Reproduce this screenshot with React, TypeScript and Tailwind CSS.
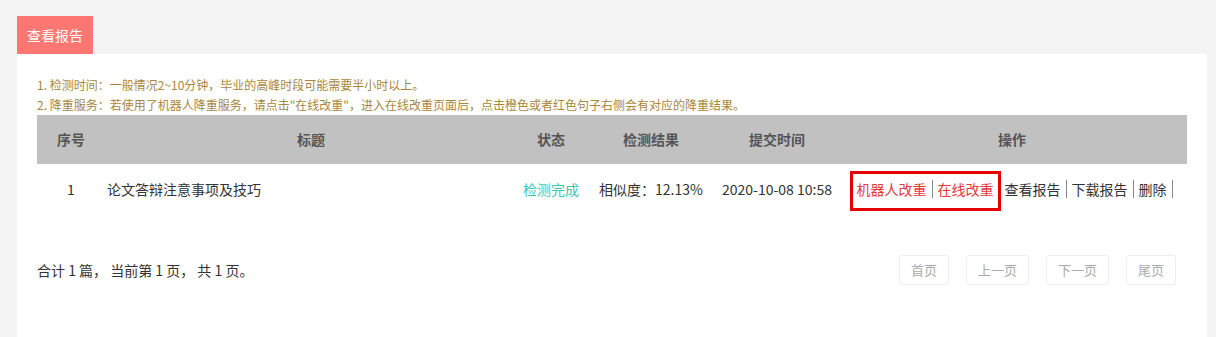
const font = { fontFamily: '"Microsoft YaHei", "Noto Sans CJK SC", sans-serif' };

const ops = ["机器人改重", "在线改重", "查看报告", "下载报告", "删除"];

const OpLink = ({ text, red }: { text: string; red?: boolean }) => (
    <span className={`inline-block px-[5px] leading-[18px] border-r border-[#888] ${red ? "text-[#e4393c]" : "text-[#333]"}`}>
        {text}
    </span>
);

const App = () => {
    return (
        <div className="min-h-[337px] bg-[#f4f4f4] pl-[17px] pr-[9px] pt-[16px]" style={font}>
            <div className="inline-flex h-[38px] items-center bg-[#fd7772] px-[10px] text-[14px] text-white">
                查看报告
            </div>
            <div className="min-h-[283px] bg-white px-[20px] pt-[21px]">
                <div className="text-[12px] leading-[20px] text-[#a8873c]">
                    <p>1. 检测时间：一般情况2~10分钟，毕业的高峰时段可能需要半小时以上。</p>
                    <p>2. 降重服务：若使用了机器人降重服务，请点击"在线改重"，进入在线改重页面后，点击橙色或者红色句子右侧会有对应的降重结果。</p>
                </div>
                <table className="w-full table-fixed border-collapse text-[14px]">
                    <colgroup>
                        <col className="w-[68px]" />
                        <col className="w-[412px]" />
                        <col className="w-[68px]" />
                        <col className="w-[132px]" />
                        <col className="w-[120px]" />
                        <col />
                    </colgroup>
                    <thead>
                        <tr className="h-[49px] bg-[#c2c1c2] font-bold text-[#555]">
                            <th className="font-bold">序号</th>
                            <th className="font-bold">标题</th>
                            <th className="font-bold">状态</th>
                            <th className="font-bold">检测结果</th>
                            <th className="font-bold">提交时间</th>
                            <th className="font-bold">操作</th>
                        </tr>
                    </thead>
                    <tbody>
                        <tr className="h-[51px] text-[#333]">
                            <td className="text-center">1</td>
                            <td className="pl-[2px] text-left">论文答辩注意事项及技巧</td>
                            <td className="text-center text-[#40c4b4]">检测完成</td>
                            <td className="text-center">相似度：12.13%</td>
                            <td className="whitespace-nowrap text-center">2020-10-08 10:58</td>
                            <td className="whitespace-nowrap text-center">
                                <span className="relative inline-block">
                                    <OpLink text={ops[0]} red />
                                    <OpLink text={ops[1]} red />
                                    <span className="pointer-events-none absolute bottom-[-11px] left-[-2px] right-[-1px] top-[-8px] border-[3px] border-[#e60000]" />
                                </span>
                                <OpLink text={ops[2]} />
                                <OpLink text={ops[3]} />
                                <OpLink text={ops[4]} />
                            </td>
                        </tr>
                    </tbody>
                </table>
                <div className="mt-[40px] flex items-center justify-between pr-[11px]">
                    <span className="text-[14px] text-[#333]">合计 1 篇， 当前第 1 页， 共 1 页。</span>
                    <div className="flex gap-[17px] text-[13px] text-[#aaa]">
                        {["首页", "上一页", "下一页", "尾页"].map((t) => (
                            <span key={t} className="flex h-[30px] items-center rounded-[3px] border border-[#eee] px-[11px]">
                                {t}
                            </span>
                        ))}
                    </div>
                </div>
            </div>
        </div>
    );
};

export default App;
